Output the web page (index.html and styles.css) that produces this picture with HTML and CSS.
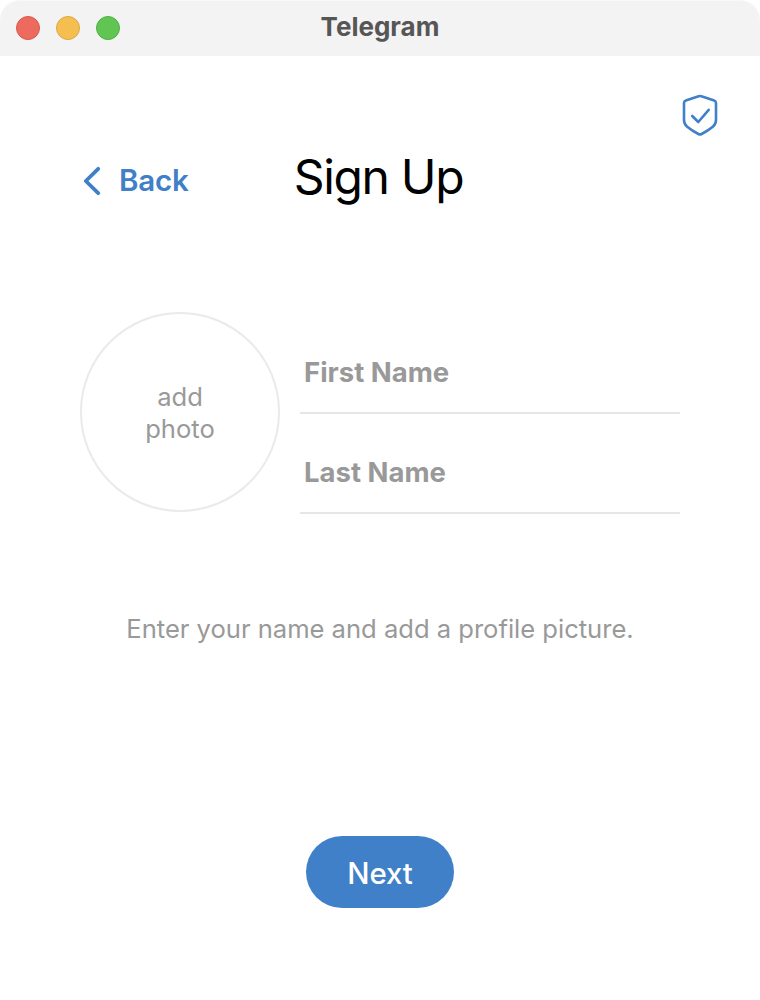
FILE: index.html
```html
<!DOCTYPE html>
<html lang="en">
<head>
<meta charset="utf-8">
<title>Telegram</title>
<link rel="stylesheet" href="styles.css">
</head>
<body>
<div class="window">
  <header class="titlebar">
    <div class="lights"><span class="light red"></span><span class="light yellow"></span><span class="light green"></span></div>
    <div class="title"><span>Telegram</span></div>
  </header>
  <div class="proxy">
    <svg width="36" height="42" viewBox="0 0 36 42" fill="none" stroke="#3f80c8" stroke-linecap="round" stroke-linejoin="round"><path stroke-width="2.6" d="M16.6 2.3 Q18 1.8 19.4 2.3 L32.2 6.5 Q34 7.1 34 9 V26 Q34 30.3 30.8 32.8 Q26 36.8 19.6 40 Q18 40.8 16.4 40 Q10 36.8 5.2 32.8 Q2 30.3 2 26 V9 Q2 7.1 3.8 6.5 Z"/><path stroke-width="2.6" d="M10.2 22 L16.3 28 L26.7 15.8"/></svg>
  </div>
  <div class="heading">
    <a class="back"><svg width="18" height="30" viewBox="0 0 18 30" fill="none" stroke="#3f80c8" stroke-width="3.8" stroke-linecap="round" stroke-linejoin="round"><path d="M15.2 2.8 L2.8 15 L15.2 27.2"/></svg><span>Back</span></a>
    <h1><span>Sign Up</span></h1>
  </div>
  <main class="form">
    <div class="photo"><span>add</span><span>photo</span></div>
    <div class="fields">
      <div class="field"><span class="first">First Name</span></div>
      <div class="field"><span class="last">Last Name</span></div>
    </div>
  </main>
  <p class="hint"><span>Enter your name and add a profile picture.</span></p>
  <button class="next"><span>Next</span></button>
</div>
</body>
</html>
```
FILE: styles.css
```css
* { box-sizing: border-box; }
body { margin: 0; background: #fff; font-family: Inter, "Liberation Sans", sans-serif; }
.window { width: 760px; height: 1000px; display: flex; flex-direction: column; background: #fff; }
.titlebar { height: 56px; background: #f3f3f3; box-shadow: inset 0 1px #f9f9f9; border-radius: 20px 20px 0 0; display: grid; grid-template-columns: 120px 1fr 120px; align-items: center; }
.lights { display: flex; gap: 16px; padding-left: 16px; }
.light { width: 24px; height: 24px; border-radius: 50%; border: 1px solid; flex: none; }
.red { background: #ed6a5e; border-color: #d9584e; }
.yellow { background: #f5bf4f; border-color: #dba748; }
.green { background: #61c554; border-color: #52b045; }
.title { text-align: center; font-size: 26px; font-weight: 700; line-height: 54px; height: 56px; color: #565656; }
.proxy { height: 80px; padding: 38px 42px 0 0; display: flex; justify-content: flex-end; }
.heading { height: 86px; display: grid; grid-template-columns: 200px 360px 200px; align-items: center; }
.back { display: flex; align-items: center; gap: 18px; padding: 4px 0 0 83px; color: #3f80c8; font-size: 29.5px; font-weight: 600; line-height: 36px; letter-spacing: -0.15px; }
.back span { padding-bottom: 2px; }
h1 { margin: 0; padding: 0 3px 5px 0; text-align: center; font-size: 48px; font-weight: 400; line-height: 60px; letter-spacing: -1.35px; white-space: nowrap; }
.form { display: flex; gap: 20px; margin: 90px 80px 0; height: 202px; }
.photo { width: 200px; height: 200px; border: 2px solid #eaeaea; border-radius: 50%; display: flex; flex-direction: column; align-items: center; justify-content: center; color: #999; font-size: 25.6px; line-height: 32px; padding-top: 2px; }
.fields { width: 380px; padding-top: 2px; }
.field { height: 100px; border-bottom: 2px solid #e6e6e6; padding: 40px 4px 0; color: #999; font-size: 27.5px; line-height: 36px; font-weight: 700; }
.hint { margin: 99px 0 0; text-align: center; color: #999; font-size: 25.6px; line-height: 32px; letter-spacing: -0.02px; }
.next { align-self: center; width: 148px; height: 72px; margin-top: 191px; border: 0; border-radius: 36px; background: #3f80c8; color: #fff; font: 550 29.5px/36px Inter, "Liberation Sans", sans-serif; letter-spacing: -0.15px; padding: 2px 0 0; }
```
